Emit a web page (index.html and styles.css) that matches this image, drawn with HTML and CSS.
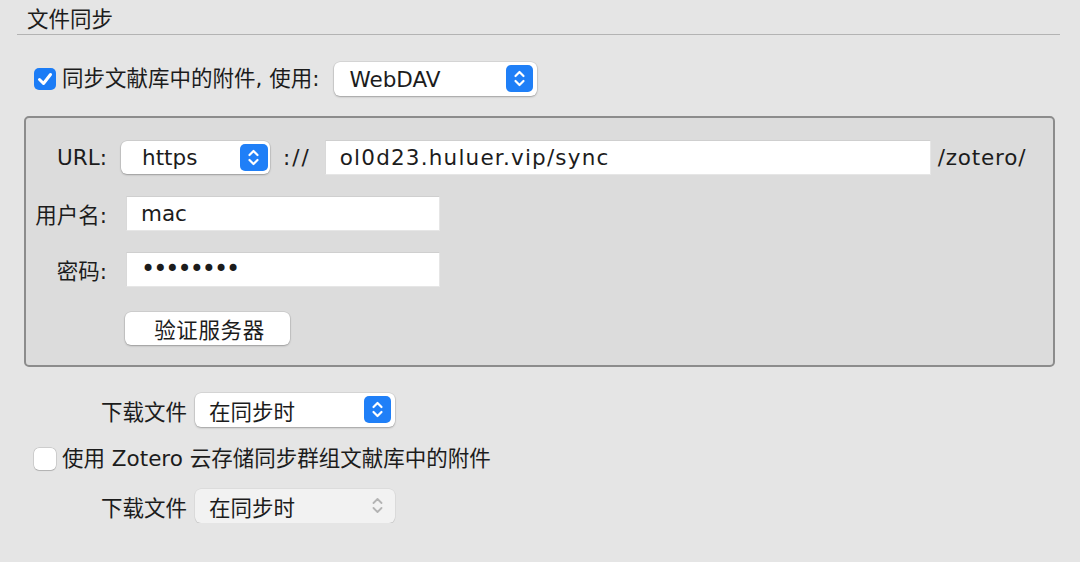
FILE: index.html
```html
<!DOCTYPE html>
<html>
<head>
    <title>文件同步</title>
    <link rel="stylesheet" href="styles.css">
</head>
<body>
    <div class="page">
        <div class="section-title">文件同步</div>

        <div class="row sync-row">
            <span class="checkbox checked">
                <svg viewBox="0 0 22 22" width="22" height="22"><path d="M5.5 11.5 L9.5 15.5 L16.5 6.5" fill="none" stroke="#fff" stroke-width="3" stroke-linecap="round" stroke-linejoin="round"/></svg>
            </span>
            <span class="check-label">同步文献库中的附件, 使用:</span>
            <div class="select select-webdav">
                <span>WebDAV</span>
                <span class="arrows"><svg viewBox="0 0 27 27" width="27" height="27"><path d="M9.5 11 L13.5 7 L17.5 11 M9.5 16 L13.5 20 L17.5 16" fill="none" stroke="#fff" stroke-width="2.2" stroke-linecap="round" stroke-linejoin="round"/></svg></span>
            </div>
        </div>

        <div class="server-box">
            <div class="field-row">
                <label class="field-label">URL:</label>
                <div class="select select-scheme">
                    <span>https</span>
                    <span class="arrows"><svg viewBox="0 0 27 27" width="27" height="27"><path d="M9.5 11 L13.5 7 L17.5 11 M9.5 16 L13.5 20 L17.5 16" fill="none" stroke="#fff" stroke-width="2.2" stroke-linecap="round" stroke-linejoin="round"/></svg></span>
                </div>
                <span class="sep">://</span>
                <div class="text-input url-input">ol0d23.huluer.vip/sync</div>
                <span class="suffix">/zotero/</span>
            </div>
            <div class="field-row">
                <label class="field-label">用户名:</label>
                <div class="text-input short-input">mac</div>
            </div>
            <div class="field-row">
                <label class="field-label">密码:</label>
                <div class="text-input short-input dots">••••••••</div>
            </div>
            <div class="field-row button-row">
                <button class="push-btn" type="button">验证服务器</button>
            </div>
        </div>

        <div class="row download-row">
            <span class="download-label">下载文件</span>
            <div class="select select-download">
                <span>在同步时</span>
                <span class="arrows"><svg viewBox="0 0 27 27" width="27" height="27"><path d="M9.5 11 L13.5 7 L17.5 11 M9.5 16 L13.5 20 L17.5 16" fill="none" stroke="#fff" stroke-width="2.2" stroke-linecap="round" stroke-linejoin="round"/></svg></span>
            </div>
        </div>

        <div class="row group-row">
            <span class="checkbox"></span>
            <span class="check-label">使用 Zotero 云存储同步群组文献库中的附件</span>
        </div>

        <div class="row download-row second">
            <span class="download-label">下载文件</span>
            <div class="select select-download disabled">
                <span>在同步时</span>
                <span class="arrows"><svg viewBox="0 0 27 27" width="27" height="27"><path d="M9.5 11 L13.5 7 L17.5 11 M9.5 16 L13.5 20 L17.5 16" fill="none" stroke="#b4b4b4" stroke-width="1.8" stroke-linecap="round" stroke-linejoin="round"/></svg></span>
            </div>
        </div>
    </div>
</body>
</html>
```

FILE: styles.css
```css
body {
    margin: 0;
    background-color: #e5e5e5;
    font-family: "DejaVu Sans", "Noto Sans CJK SC", sans-serif;
    font-size: 21.5px;
    color: #1c1c1c;
}

.page {
    padding: 6px 20px 0 17px;
}

.section-title {
    font-family: "Noto Sans CJK SC", sans-serif;
    line-height: 24px;
    padding: 0 0 4px 10px;
    border-bottom: 1px solid #b3b3b3;
}

.row {
    display: flex;
    align-items: center;
}

.sync-row {
    margin-top: 27px;
    height: 34px;
    padding-left: 17px;
}

.checkbox {
    width: 22px;
    height: 22px;
    box-sizing: border-box;
    border-radius: 5px;
    background-color: #fff;
    box-shadow: 0 0 0 0.5px rgba(0, 0, 0, 0.18), 0 0.5px 1px rgba(0, 0, 0, 0.15);
    display: flex;
    flex-shrink: 0;
}

.checkbox.checked {
    background-color: #1b7cf6;
    box-shadow: none;
}

.check-label {
    margin-left: 6px;
    line-height: 24px;
    white-space: nowrap;
}

.select {
    position: relative;
    display: flex;
    align-items: center;
    box-sizing: border-box;
    height: 34px;
    background-color: #fff;
    border-radius: 6px;
    box-shadow: 0 0 0 0.5px rgba(0, 0, 0, 0.12), 0 1px 2px rgba(0, 0, 0, 0.25);
}

.select .arrows {
    position: absolute;
    right: 4px;
    top: 3px;
    width: 27px;
    height: 27px;
    border-radius: 5px;
    background-color: #1f7ff7;
}

.select-webdav {
    margin-left: 15px;
    width: 203px;
    padding-left: 15px;
}

.server-box {
    margin: 20px 5px 0 7px;
    height: 251px;
    box-sizing: border-box;
    border: 2px solid #8c8c8c;
    border-radius: 5px;
    background-color: #dcdcdc;
    padding: 21px 0 0 0;
    display: flex;
    flex-direction: column;
    gap: 20px;
}

.field-row {
    display: flex;
    align-items: center;
    height: 36px;
}

.field-label {
    width: 81px;
    text-align: right;
}

.select-scheme {
    margin-left: 14px;
    width: 149px;
    height: 33px;
    padding-left: 21px;
}

.select-scheme .arrows {
    top: 3px;
    right: 2px;
    width: 28px;
}

.sep {
    margin-left: 13px;
    letter-spacing: 2px;
}

.text-input {
    box-sizing: border-box;
    height: 35px;
    background-color: #fff;
    border-top: 1px solid #cfcfcf;
    border-left: 1px solid #d9d9d9;
    border-right: 1px solid #e6e6e6;
    border-bottom: 1px solid #e6e6e6;
    padding-left: 14px;
    display: flex;
    align-items: center;
}

.url-input {
    margin-left: 14px;
    width: 606px;
    letter-spacing: 1.2px;
}

.suffix {
    margin-left: 7px;
    letter-spacing: 0.8px;
}

.short-input {
    margin-left: 19px;
    width: 314px;
}

.dots {
    font-size: 24px;
    letter-spacing: -2px;
}

.button-row {
    margin-top: 5px;
    height: 33px;
    padding-left: 99px;
}

.push-btn {
    width: 165px;
    height: 33px;
    border: none;
    border-radius: 6px;
    background-color: #fff;
    box-shadow: 0 0 0 0.5px rgba(0, 0, 0, 0.12), 0 1px 2px rgba(0, 0, 0, 0.25);
    font-family: "Noto Sans CJK SC", sans-serif;
    font-size: 21.5px;
    letter-spacing: 0.6px;
    color: #1c1c1c;
    padding: 0 0 0 4px;
}

.download-row {
    margin-top: 26px;
    height: 34px;
    padding-left: 84px;
}

.download-row.second {
    margin-top: 18px;
}

.download-label {
    font-family: "Noto Sans CJK SC", sans-serif;
}

.select-download {
    margin-left: 8px;
    width: 200px;
    padding-left: 14px;
    font-family: "Noto Sans CJK SC", sans-serif;
}

.select-download.disabled {
    background-color: #f2f2f2;
    box-shadow: 0 0 0 0.5px rgba(0, 0, 0, 0.08), 0 1px 1px rgba(0, 0, 0, 0.1);
}

.select-download.disabled .arrows {
    background-color: transparent;
}

.group-row {
    margin-top: 20px;
    height: 24px;
    padding-left: 17px;
}
```
